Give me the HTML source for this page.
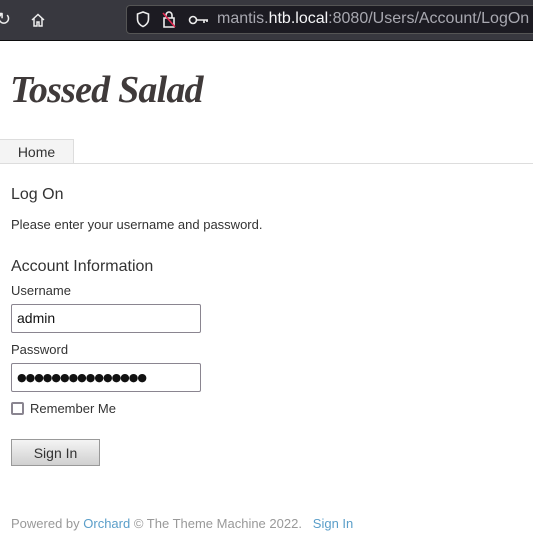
<!DOCTYPE html>
<html><head><meta charset="utf-8"><style>
body{margin:0;width:533px;height:544px;overflow:hidden;background:#fff;font-family:"Liberation Sans",sans-serif;position:relative}
.bar{position:absolute;left:0;top:0;width:533px;height:40px;background:#38383f;border-bottom:1px solid #0c0c0d}
.url{position:absolute;left:126px;top:5px;width:420px;height:29px;background:#1c1b22;border:1px solid #555;border-radius:4px;box-sizing:border-box}
.u{position:absolute;left:217px;top:10px;font-size:16px;color:#a8a8b0;white-space:nowrap}
.u b{color:#f5f5f7;font-weight:normal}
.a{position:absolute;white-space:nowrap}
h1{position:absolute;left:10px;top:68px;margin:0;font:italic bold 38px "Liberation Serif",serif;color:#3f3a3a;letter-spacing:-0.8px}
.tab{position:absolute;left:-1px;top:139px;width:75px;height:25px;background:#f4f4f4;border:1px solid #ddd;border-bottom:none;box-sizing:border-box;font-size:14px;color:#333;text-align:center;line-height:25px}
.line{position:absolute;left:0;top:163px;width:533px;height:1px;background:#ddd}
.t{position:absolute;left:11px;width:190px;height:29px;border:1px solid #8a8590;border-radius:2px;box-sizing:border-box;font-size:14px;padding:0 5px;line-height:27px;color:#111}
.btn{position:absolute;left:11px;top:439px;width:89px;height:27px;border:1px solid #999;box-sizing:border-box;background:linear-gradient(#f4f4f4,#d0d0d0);font-size:14px;color:#333;text-align:center;line-height:27px}
</style></head><body>
<div class="bar">
<div class="a" style="left:-4px;top:9px;color:#eee;font-size:18px">&#x21bb;</div>
<svg class="a" style="left:30px;top:12px" width="16" height="16" viewBox="0 0 16 16" fill="none" stroke="#eee" stroke-width="1.5"><path d="M2 8L8 2.5 14 8M4 6.5V14h3v-4h2v4h3V6.5"/></svg>
<div class="url"></div>
<svg class="a" style="left:136px;top:11px" width="14" height="17" viewBox="0 0 14 17" fill="none" stroke="#eee" stroke-width="1.6"><path d="M7 1L1.5 3v5c0 4 3 6.5 5.5 7.5 2.5-1 5.5-3.5 5.5-7.5V3z"/></svg>
<svg class="a" style="left:161px;top:10px" width="16" height="19" viewBox="0 0 16 19" fill="none" stroke="#eee" stroke-width="1.6"><path d="M5 8V5a3 3 0 016 0v3M3 8h10v9H3z"/><path d="M2 3l12 14" stroke="#e22850"/></svg>
<svg class="a" style="left:188px;top:15px" width="22" height="10" viewBox="0 0 22 10" fill="none" stroke="#eee" stroke-width="1.6"><circle cx="5" cy="5" r="3.5"/><path d="M9 5h11M16 5v3M19 5v2"/></svg>
<div class="u">mantis.<b>htb.local</b>:8080/Users/Account/LogOn</div>
</div>
<h1>Tossed Salad</h1>
<div class="tab">Home</div>
<div class="line"></div>
<div class="a" style="left:11px;top:186px;font-size:16px;color:#333">Log On</div>
<div class="a" style="left:11px;top:217px;font-size:13px;color:#333">Please enter your username and password.</div>
<div class="a" style="left:11px;top:258px;font-size:16px;color:#333">Account Information</div>
<div class="a" style="left:11px;top:283px;font-size:13px;color:#333">Username</div>
<div class="t" style="top:304px">admin</div>
<div class="a" style="left:11px;top:342px;font-size:13px;color:#333">Password</div>
<div class="t" style="top:363px;font-family:'DejaVu Sans',sans-serif;font-size:11px;padding-left:5px;letter-spacing:-1px">●●●●●●●●●●●●●●●</div>
<div class="a" style="left:11px;top:402px;width:13px;height:13px;border:2px solid #8a8590;border-radius:2px;box-sizing:border-box"></div>
<div class="a" style="left:30px;top:401px;font-size:13px;color:#333">Remember Me</div>
<div class="btn">Sign In</div>
<div class="a" style="left:11px;top:516px;font-size:13px;color:#999">Powered by <span style="color:#5a9ec9">Orchard</span> © The Theme Machine 2022.&nbsp;&nbsp; <span style="color:#5a9ec9">Sign In</span></div>
</body></html>
